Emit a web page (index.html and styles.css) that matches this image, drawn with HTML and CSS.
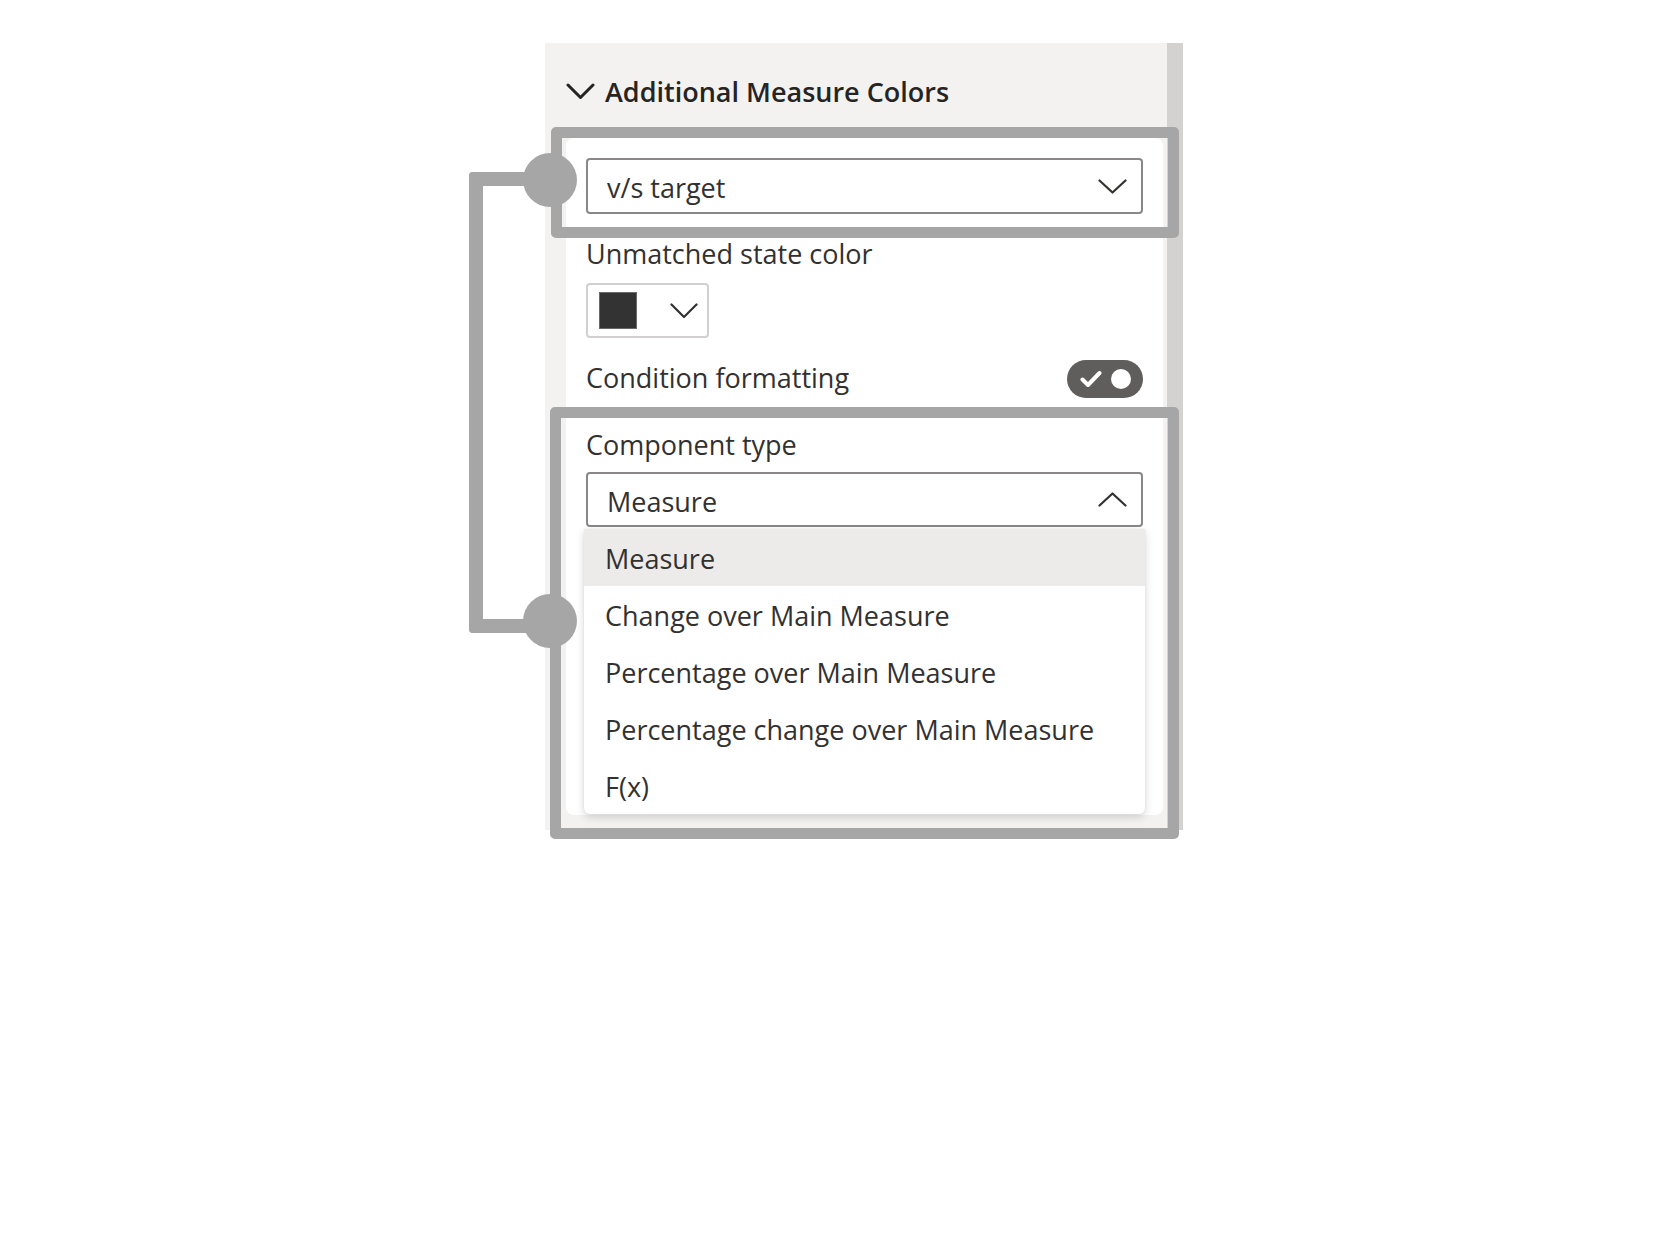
FILE: index.html
```html
<!DOCTYPE html>
<html lang="en">
<head>
<meta charset="utf-8">
<title>Additional Measure Colors</title>
<link rel="stylesheet" href="styles.css">
</head>
<body>
<div class="stage">
  <div class="panel">
    <div class="pane">
      <div class="pane-header">
        <svg class="chev-head" width="29" height="17" viewBox="0 0 29 17"><path d="M2 2 L14.5 14.5 L27 2" fill="none" stroke="#252423" stroke-width="3" stroke-linecap="round" stroke-linejoin="round"/></svg>
        <span class="pane-title">Additional Measure Colors</span>
      </div>
      <div class="card">
        <div class="select">
          <span class="select-text">v/s target</span>
          <svg class="chev" width="29" height="15" viewBox="0 0 29 15"><path d="M1.5 1.5 L14.5 13.5 L27.5 1.5" fill="none" stroke="#323130" stroke-width="2.2" stroke-linecap="round" stroke-linejoin="round"/></svg>
        </div>
        <div class="label label-unmatched">Unmatched state color</div>
        <div class="color-btn">
          <span class="swatch"></span>
          <svg class="chev-sm" width="28" height="16" viewBox="0 0 28 16"><path d="M1.5 1.5 L14 14 L26.5 1.5" fill="none" stroke="#323130" stroke-width="2.2" stroke-linecap="round" stroke-linejoin="round"/></svg>
        </div>
        <div class="row">
          <span class="label label-cond">Condition formatting</span>
          <span class="toggle">
            <svg class="check" width="22" height="18" viewBox="0 0 22 18"><path d="M2.5 9.5 L8 15 L19.5 3" fill="none" stroke="#ffffff" stroke-width="4" stroke-linecap="round" stroke-linejoin="round"/></svg>
            <span class="knob"></span>
          </span>
        </div>
        <div class="label label-ct">Component type</div>
        <div class="select select-open">
          <span class="select-text">Measure</span>
          <svg class="chev" width="29" height="15" viewBox="0 0 29 15"><path d="M1.5 13.5 L14.5 1.5 L27.5 13.5" fill="none" stroke="#323130" stroke-width="2.2" stroke-linecap="round" stroke-linejoin="round"/></svg>
        </div>
        <ul class="listbox">
          <li class="option option-selected">Measure</li>
          <li class="option">Change over Main Measure</li>
          <li class="option">Percentage over Main Measure</li>
          <li class="option">Percentage change over Main Measure</li>
          <li class="option">F(x)</li>
        </ul>
      </div>
    </div>
    <div class="scrollbar"></div>
  </div>

  <div class="hl hl-1"></div>
  <div class="hl hl-2"></div>
  <div class="connector"></div>
  <div class="dot dot-1"></div>
  <div class="dot dot-2"></div>
</div>
</body>
</html>
```

FILE: styles.css
```css
* {
  box-sizing: border-box;
}

html, body {
  margin: 0;
  padding: 0;
  background: #ffffff;
}

body {
  width: 1680px;
  height: 1254px;
  font-family: "Open Sans", "Noto Sans", "Liberation Sans", sans-serif;
  color: #323130;
  overflow: hidden;
}

.stage {
  position: relative;
  width: 1680px;
  height: 1254px;
  padding: 43px 0 0 545px;
}

.panel {
  display: flex;
  width: 638px;
  height: 787px;
}

.pane {
  flex: 1;
  display: flex;
  flex-direction: column;
  background: #f3f2f1;
  padding-bottom: 15px;
}

.scrollbar {
  width: 16px;
  background: #d4d2d0;
}

.pane-header {
  height: 95px;
  display: flex;
  align-items: center;
  gap: 10px;
  padding-left: 21px;
}

.chev-head {
  display: block;
  margin-top: 1px;
}

.pane-title {
  font-size: 27px;
  font-weight: 600;
  line-height: 36px;
  color: #252423;
  margin-top: 2px;
}

.card {
  flex: 1;
  margin: 0 4px 0 21px;
  background: #ffffff;
  border-radius: 8px;
  padding: 20px 20px 0 20px;
  display: flex;
  flex-direction: column;
}

.select {
  height: 56px;
  border: 2px solid #8a8886;
  border-radius: 4px;
  background: #ffffff;
  display: flex;
  align-items: center;
  justify-content: space-between;
  padding: 0 14px 0 19px;
}

.select-open {
  height: 55px;
  margin-top: 9px;
}

.select-text {
  font-size: 27px;
  line-height: 36px;
  color: #323130;
  margin-top: 4px;
}

.chev, .chev-sm {
  display: block;
}

.label {
  font-size: 27px;
  line-height: 36px;
  color: #323130;
}

.label-unmatched {
  margin-top: 22px;
}

.color-btn {
  margin-top: 11px;
  width: 123px;
  height: 55px;
  border: 2px solid #d2d0ce;
  border-radius: 4px;
  display: flex;
  align-items: center;
  padding-left: 11px;
  gap: 33px;
}

.swatch {
  width: 38px;
  height: 37px;
  background: #333333;
  border: 1px solid #6b6a69;
}

.row {
  margin-top: 22px;
  height: 38px;
  display: flex;
  align-items: center;
  justify-content: space-between;
}

.label-cond {
  padding-bottom: 3px;
}

.toggle {
  width: 76px;
  height: 38px;
  border-radius: 19px;
  background: #605e5c;
  display: flex;
  align-items: center;
  padding-left: 13px;
  gap: 9px;
}

.check {
  display: block;
}

.knob {
  width: 20px;
  height: 20px;
  border-radius: 50%;
  background: #ffffff;
}

.label-ct {
  margin-top: 29px;
}

.listbox {
  list-style: none;
  margin: 2px -2px 0 -2px;
  padding: 0;
  background: #ffffff;
  border-radius: 0 0 6px 6px;
  box-shadow: 0 3px 9px rgba(0, 0, 0, 0.16), 0 0 2px rgba(0, 0, 0, 0.08);
}

.option {
  height: 57px;
  display: flex;
  align-items: center;
  padding: 3px 0 0 21px;
  font-size: 27px;
  line-height: 36px;
  color: #323130;
}

.option-selected {
  background: #edebe9;
}

/* annotation overlays */
.hl {
  position: absolute;
  border: 11px solid #a6a6a6;
  border-radius: 5px;
}

.hl-1 {
  left: 551px;
  top: 127px;
  width: 628px;
  height: 111px;
}

.hl-2 {
  left: 550px;
  top: 407px;
  width: 629px;
  height: 432px;
}

.connector {
  position: absolute;
  left: 469px;
  top: 172px;
  width: 70px;
  height: 461px;
  border: 14px solid #a6a6a6;
  border-right: none;
  border-radius: 4px 0 0 4px;
}

.dot {
  position: absolute;
  width: 54px;
  height: 54px;
  border-radius: 50%;
  background: #a6a6a6;
}

.dot-1 {
  left: 523px;
  top: 153px;
}

.dot-2 {
  left: 523px;
  top: 594px;
}
```
